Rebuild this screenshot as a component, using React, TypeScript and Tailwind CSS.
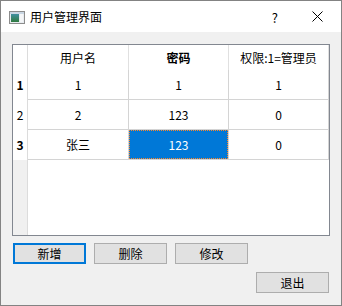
import React from "react";

const FONT = `"Microsoft YaHei", "Noto Sans CJK SC", "Noto Sans", sans-serif`;

function TitleIcon() {
  return (
    <svg width="16" height="13" viewBox="0 0 16 13" className="shrink-0">
      <defs>
        <linearGradient id="g1" x1="0" y1="0" x2="0" y2="1">
          <stop offset="0" stopColor="#3f8fa0" />
          <stop offset="1" stopColor="#2f7a3f" />
        </linearGradient>
      </defs>
      <rect x="0.5" y="0.5" width="15" height="12" fill="#e8ecf0" stroke="#8c8c8c" />
      <rect x="1" y="1" width="14" height="2" fill="#c9d6e3" />
      <rect x="2" y="3" width="8" height="8" fill="url(#g1)" />
      <rect x="11" y="3" width="3" height="8" fill="#f4f6f8" />
    </svg>
  );
}

function Btn({ label, focused }: { label: string; focused?: boolean }) {
  return (
    <div
      className={
        focused
          ? "h-[21px] border-2 border-[#0078d7] bg-[#e1e1e1] flex items-center justify-center text-[12px] text-black"
          : "h-[21px] border border-[#adadad] bg-[#e1e1e1] flex items-center justify-center text-[12px] text-black"
      }
    >
      {label}
    </div>
  );
}

export default function App() {
  const rows = [
    { n: "1", bold: true, cells: ["1", "1", "1"] },
    { n: "2", bold: false, cells: ["2", "123", "0"] },
    { n: "3", bold: true, cells: ["张三", "123", "0"] },
  ];
  return (
    <div
      className="w-[342px] h-[306px] border border-[#838383] bg-[#f0f0f0] flex flex-col text-black"
      style={{ fontFamily: FONT }}
    >
      {/* Title bar */}
      <div className="h-[31px] bg-white flex items-center relative">
        <div className="ml-[8px] mt-[1px]">
          <TitleIcon />
        </div>
        <div className="ml-[5px] text-[12px] leading-none">用户管理界面</div>
        <div className="flex-1" />
        <div className="text-[13px] leading-none mr-[34px] mt-[1px]">?</div>
        <svg width="11" height="11" viewBox="0 0 11 11" className="mr-[18px]">
          <path d="M0.5 0.5 L10.5 10.5 M10.5 0.5 L0.5 10.5" stroke="#000" strokeWidth="1" />
        </svg>
      </div>

      {/* Client */}
      <div className="flex-1 pl-[11px] pt-[12px] flex flex-col">
        <div className="w-[318px] h-[192px] border border-[#828790] bg-white grid grid-cols-[15px_101px_100px_100px] grid-rows-[25px_30px_30px_30px_1fr] text-[12px]">
          {/* header */}
          <div className="border-r border-[#dcdcdc]" />
          <div className="border-r border-[#e0e0e0] flex items-center justify-center">用户名</div>
          <div className="border-r border-[#e0e0e0] flex items-center justify-center font-bold">密码</div>
          <div className="border-r border-[#e0e0e0] flex items-center justify-center">权限:1=管理员</div>
          {rows.map((r, i) => (
            <React.Fragment key={i}>
              <div
                className={
                  "border-r border-[#dcdcdc] flex items-center justify-center " +
                  (r.bold ? "font-bold" : "")
                }
              >
                {r.n}
              </div>
              {r.cells.map((c, j) => {
                const sel = i === 2 && j === 1;
                return (
                  <div key={j} className="border-r border-b border-[#d4d4d4]">
                    {sel ? (
                      <div className="w-full h-full bg-[#0078d7] text-white border border-dotted border-[#ff8728] flex items-center justify-center">
                        {c}
                      </div>
                    ) : (
                      <div className="w-full h-full flex items-center justify-center">{c}</div>
                    )}
                  </div>
                );
              })}
            </React.Fragment>
          ))}
          <div className="bg-[#f0f0f0] border-r border-[#dcdcdc]" />
          <div className="col-span-3" />
        </div>

        <div className="mt-[7px] ml-px w-[316px] grid grid-cols-4 gap-x-[8px] gap-y-[8px]">
          <Btn label="新增" focused />
          <Btn label="删除" />
          <Btn label="修改" />
          <div />
          <div />
          <div />
          <div />
          <Btn label="退出" />
        </div>
      </div>
    </div>
  );
}
